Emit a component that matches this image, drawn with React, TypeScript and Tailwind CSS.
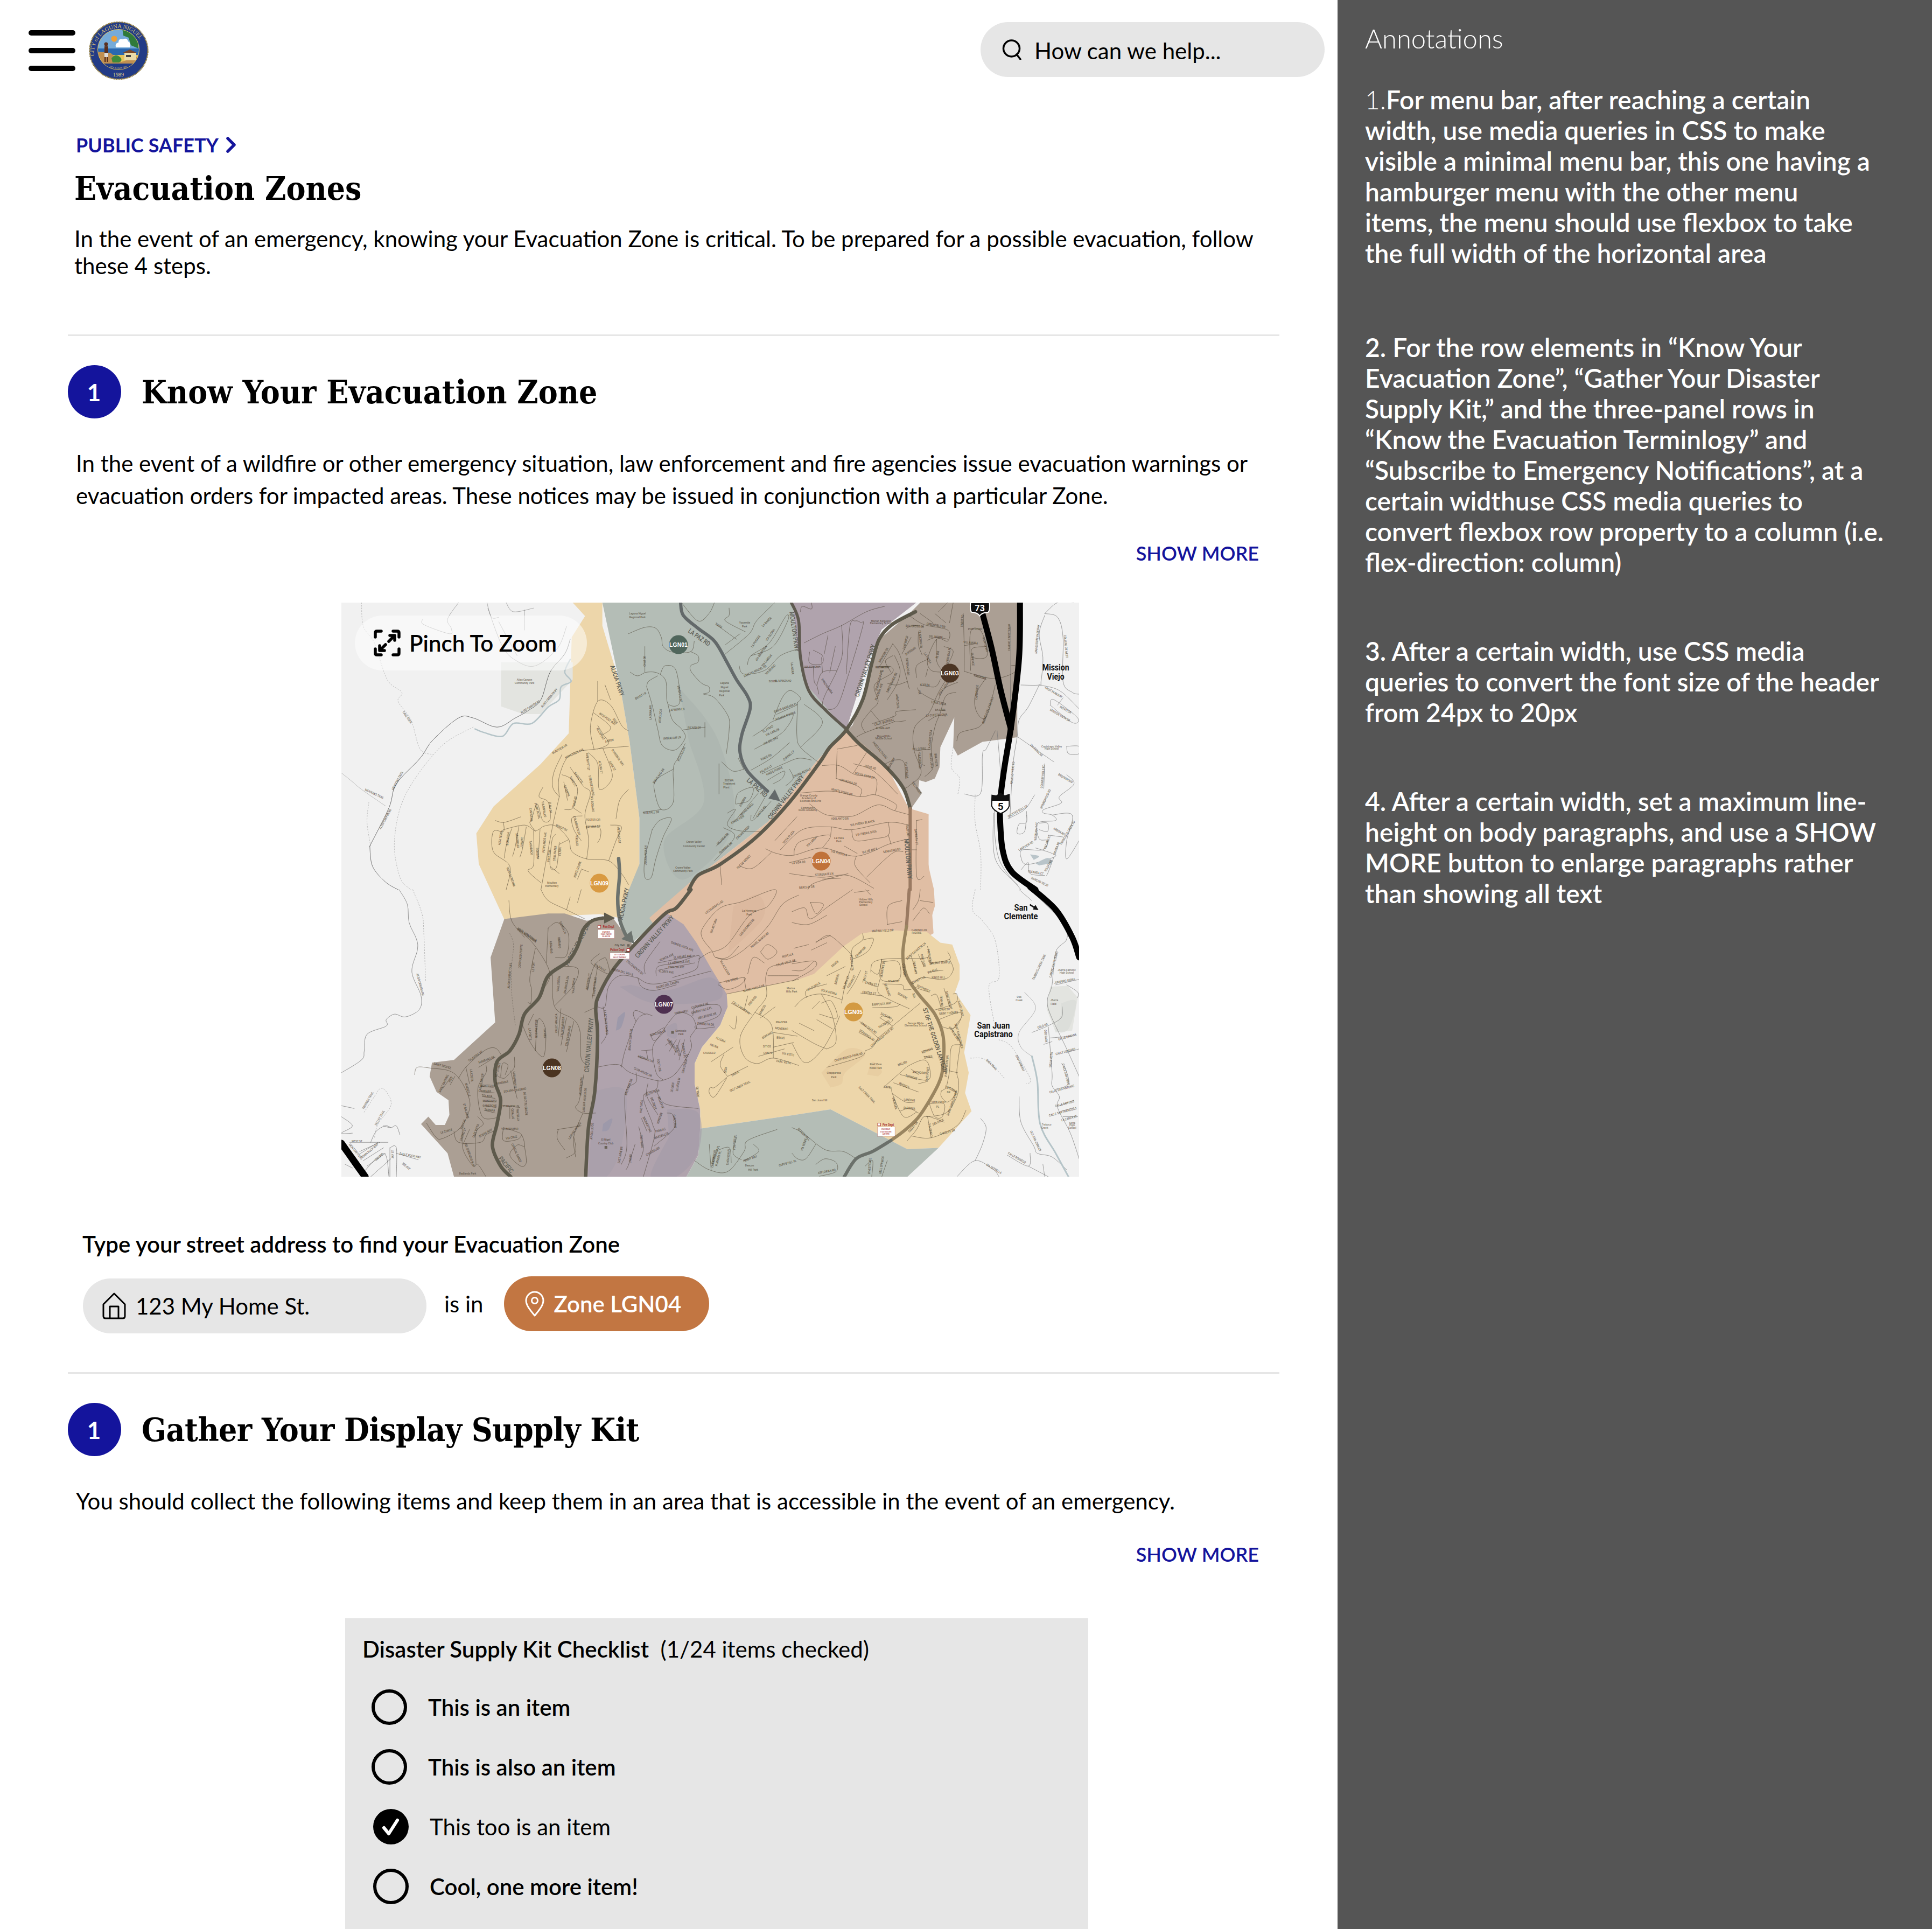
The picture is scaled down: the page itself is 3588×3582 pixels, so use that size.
import React from "react";

const smooth = (s: string, close = false) => {
  const p = s.trim().split(/\s+/).map((a) => a.split(",").map(Number));
  let d = `M${p[0][0]} ${p[0][1]}`;
  for (let i = 0; i < p.length - 1; i++) {
    const a = p[Math.max(0, i - 1)], b = p[i], c = p[i + 1], e = p[Math.min(p.length - 1, i + 2)];
    d += ` C${b[0] + (c[0] - a[0]) / 6} ${b[1] + (c[1] - a[1]) / 6} ${c[0] - (e[0] - b[0]) / 6} ${c[1] - (e[1] - b[1]) / 6} ${c[0]} ${c[1]}`;
  }
  return d + (close ? " Z" : "");
};

const Line = ({ s, c = "#3a3020", w = 1, o = 0.5, dash }: { s: string; c?: string; w?: number; o?: number; dash?: string }) => (
  <path d={smooth(s)} fill="none" stroke={c} strokeWidth={w} strokeOpacity={o} strokeDasharray={dash} strokeLinecap="round" strokeLinejoin="round" vectorEffect="non-scaling-stroke" />
);
const Patch = ({ s, c, o = 0.55 }: { s: string; c: string; o?: number }) => <path d={smooth(s, true)} fill={c} fillOpacity={o} />;

type Lb = [number, number, number, string];
const Labels = ({ list, size = 18, fill = "#3a3020", o = 0.68, weight = 500, sx = 0.8 }: { list: Lb[]; size?: number; fill?: string; o?: number; weight?: number; sx?: number }) => (
  <>
    {list.filter((l) => l[3]).map(([x, y, r, t], i) => (
      <text key={i} x={0} y={0} transform={`translate(${x} ${y}) rotate(${r}) scale(${sx} 1)`} textAnchor="middle" fontSize={size} fill={fill} fillOpacity={o} fontWeight={weight} style={{ fontFamily: "Roboto, sans-serif" }}>
        {t}
      </text>
    ))}
  </>
);

const z6Streets = [
  "445,90 450,120 590,170 600,140 580,90 640,0", "795,0 820,80 860,80", "800,30 880,240 960,320 1060,345 1180,250 1230,130",
  "900,0 940,50 1050,30", "1000,40 1000,150", "860,105 900,180 960,290", "1190,1060 1190,950 1250,830 1390,800 1568,785",
  "1190,1060 1150,1240 1090,1568", "1205,830 1160,930 1155,1010 1190,1060", "1250,900 1320,1000 1360,1040 1330,1160 1350,1290 1340,1400",
  "1205,940 1250,960 1290,1020 1265,1120 1220,1130", "1215,980 1235,1080", "1380,800 1360,680 1400,540 1470,560 1530,670 1568,700",
  "1375,600 1470,680 1420,725", "1400,670 1430,720 1460,770 1400,800", "1350,820 1400,880 1410,1020 1480,950 1430,800",
  "840,1190 890,1200 980,1170", "885,1200 885,1250 830,1250 830,1360 920,1440 900,1568",
  "885,1240 1000,1215 1060,1245 1110,1220 1170,1220 1240,1290 1260,1360 1340,1400 1460,1410 1530,1480 1568,1540",
  "930,1235 900,1330 890,1395", "970,1220 950,1330 935,1385", "1010,1225 990,1340 975,1390", "1050,1245 1050,1430 1020,1465 1090,1530",
  "1085,1240 1075,1400", "1100,1010 1080,1060 1130,1090 1140,1185 1100,1190 1070,1100 1040,1180 1030,1205 1060,1250",
  "1140,1440 1190,1480", "1170,1265 1150,1300 1140,1440 1175,1445 1190,1310", "1240,1295 1190,1320", "1265,1120 1310,1150",
  "1315,1165 1260,1175 1270,1240 1310,1300", "1340,1220 1410,1230 1415,1280 1400,1310", "1470,1215 1530,1225 1500,1300 1460,1410",
  "1500,1180 1520,1080 1568,1020", "1310,1460 1290,1510", "1310,1455 1350,1470", "1400,430 1400,540", "1440,450 1470,530",
];
const z6Labels: Lb[] = [
  [1000, 425, 0, "Aliso Canyon"], [1000, 445, 0, "Community Park"], [1035, 575, -32, "ALISO CANYON RD"], [1140, 525, -50, "ALISO CREEK PKWY"],
  [245, 1185, -62, "ALISO CANYON RD"], [178, 1050, 25, "MEADOWS TRAIL"], [312, 975, -62, "MEADOWS TRAIL"], [355, 630, 55, "CAVE ROCK"],
  [1195, 805, -30, "BEAUVIEW DR"], [1275, 830, -25, "HIGHLANDS AVE"], [1340, 870, 85, "AMETHYST ST"], [1410, 900, 80, "ALTURA ST"], [1475, 895, 60, "DARK ST"],
  [1290, 960, 55, "BAGUETTE"], [1360, 1000, 80, "S BRIDGETON DR"], [1260, 980, 60, "THIRD CT"], [1225, 1030, 70, "SEVENTH"], [1280, 1090, -80, "TRINIDAD"],
  [1100, 1130, 80, "VIA RAPALLO"], [1135, 1120, 85, "ELMA DR"], [1065, 1140, 75, "POINT ROYAL"], [1030, 1160, 85, "CHRISTINA"], [1200, 1235, 25, "WINGS DR"],
  [1115, 1310, -85, "PEPPLANDS AVE"], [1375, 1190, 0, "FOSTER CIR"], [1375, 1230, -5, "BALMAR DR"], [1280, 1220, 75, "COLDBROOK DR"], [1280, 1300, 85, "VIRGILIO"],
  [875, 1285, -80, "ALTA TERRA"], [915, 1290, -85, "BONAFILIA"], [955, 1300, 85, "STAVANGER"], [992, 1310, -85, "JUANITE"], [1030, 1340, 85, "TAMARACK"], [1065, 1370, 85, "SONOMA"],
  [1140, 1385, -85, "PRESTON"], [1172, 1370, -85, "STILLWATER"], [1200, 1360, -85, "FILTON"], [1490, 650, 55, "SEER"], [1450, 640, 35, "WESTPOST WAY"], [1410, 720, 60, "ROCKPORT"],
  [1465, 760, -15, "AARON"], [1505, 850, 55, "POWERFUL WAY"], [1365, 1100, 85, "DEL ROSARIO"], [1510, 1270, 85, "MESHILLO ST"], [1150, 1535, 0, "Moulton"], [1150, 1552, 0, "Elementary"],
  [1295, 1460, -70, "WHITE GOOSE"], [920, 1500, 70, "VISTA MONTANA"],
];
const z7Streets = [
  "0,170 90,135 150,140 180,190 190,240 240,270 340,268 360,210", "340,268 380,290 380,325 340,345 345,380 400,440 440,460 440,490 410,500 470,520 545,620 550,700 535,825",
  "90,240 90,380", "10,380 50,400 100,380 160,385 205,430 215,550 280,545 260,370 200,345 175,390", "100,460 130,560 160,690 185,780 255,805 310,740 290,690 240,640 215,550",
  "100,460 110,430 160,400", "300,695 420,680", "418,655 418,735", "245,910 150,970 145,1040 180,1130 245,1090 245,910 270,850 310,770", "80,1145 180,1130",
  "130,1240 170,1190 235,1180 190,1280 150,1400 125,1500 90,1500 90,1400 130,1240", "605,345 630,390 745,370 830,290 920,255", "650,340 670,290 770,220 860,75 870,100 790,240 670,290",
  "690,800 840,710 900,610 810,640 770,660 740,690 680,730", "810,610 920,560", "925,545 940,520 885,480 840,520 790,640", "925,545 920,720 940,790 1035,870", "940,790 1060,655 960,555",
  "670,915 780,850 880,765", "730,935 850,880 930,850 1000,860", "880,910 900,960 860,1000", "760,970 850,920 840,960 790,990", "630,910 600,850", "510,870 570,920 630,910", "495,880 495,1045",
  "585,1100 600,1040 680,1010 660,1080 590,1100", "580,1195 710,1040", "680,1180 745,1065", "670,1160 680,1190 780,1085", "540,1150 585,1130 540,1210 600,1245 720,1250", "480,1330 545,1265", "520,1230 580,1280 470,1410",
  "1140,800 1250,780", "1135,960 1140,810", "1135,960 1265,1010 1265,1060", "1060,890 1150,890 1240,940 1350,960 1350,1050", "1230,880 1340,920 1470,1045", "1230,930 1300,820",
  "940,1040 1110,1030 1265,1060 1350,1050 1460,1100 1455,1135", "990,1100 1060,1150 1120,1165 1230,1165 1360,1105 1450,1135 1540,1160",
  "750,1345 810,1370 900,1380 1060,1340 1245,1385 1420,1320 1510,1295", "800,1300 920,1170", "830,1350 950,1240 1100,1225 1220,1240 1420,1200 1530,1215", "905,1380 910,1340 950,1300 1100,1270 1060,1340", "1110,1225 1105,1270",
  "1220,1245 1240,1300 1340,1290 1420,1270 1420,1200", "1420,1270 1435,1320", "880,1420 1000,1390", "610,1440 680,1450 780,1365", "1245,1385 1240,1440 1320,1530", "1300,1500 1440,1370 1500,1360", "1180,1330 1250,1370",
  "940,50 950,20 1000,35 1000,0", "960,220 1060,170 1165,125 1300,50 1400,20", "1165,125 1170,270 1140,370 1060,550 1135,570 1200,400 1280,130 1270,110 1240,100 1210,130 1190,390",
  "1030,450 1060,380 1140,370", "1010,350 1015,430 1030,455 1040,500", "990,270 990,330 1055,335 1060,290 1010,260", "960,355 1050,350", "1055,300 1060,380", "1090,180 1070,280", "1130,240 1100,380",
  "290,0 380,100 440,60 470,0", "550,30 550,70 530,100 640,160", "530,280 660,170 700,100 800,0", "480,120 590,200", "530,230 610,170",
  "880,1480 1050,1500 1200,1490 1340,1560", "980,1568 1020,1530 1200,1480", "1060,1510 1160,1505", "500,1430 510,1540",
];
const z7Labels: Lb[] = [
  [50, 65, 0, "Laguna Niguel"], [50, 85, 0, "Regional Park"], [525, 445, 0, "Laguna"], [525, 467, 0, "Niguel"], [525, 489, 0, "Regional"], [510, 511, 0, "Park"],
  [550, 975, 0, "SOCWA"], [550, 995, 0, "Treatment"], [535, 1015, 0, "Plant"], [358, 1313, 0, "Crown Valley"], [358, 1335, 0, "Community Center"], [298, 1452, 0, "Crown Valley"], [298, 1472, 0, "Community Park"],
  [635, 115, 0, "Yosemite"], [635, 135, 0, "Park"], [1150, 1290, 0, "La Plata"], [1150, 1310, 0, "Park"], [95, 320, -90, "CHAT DR"], [70, 515, -30, "BRANT LN"], [125, 600, -90, "LAGUNA DR"], [180, 620, -85, "WOODLOCK"],
  [265, 590, -5, "LAPWING LN"], [360, 688, 0, "RICARD DR"], [240, 745, -5, "INGRAHAM LN"], [295, 830, -65, "RITE OLD DR"], [170, 950, -55, "BORGLAND DR"], [125, 1152, -3, "KITE FALL DR"], [100, 1380, -90, "JUAN MARIA LN"],
  [275, 500, 80, "MINDFULL DR"], [490, 130, 30, "THIRD"], [760, 110, -45, "LA BARGA"], [780, 180, -55, "VIA GLORIA"], [700, 215, -55, "LA POSADA"], [730, 280, -55, "VIA MARIPOSA"], [760, 320, -50, "VIA CAREGA"],
  [695, 380, -25, "RANCHO MIGUEL RD"], [790, 435, 0, "SOUTH"], [845, 432, 0, "EL MANZANO"], [890, 360, 85, "LA ALERA"], [780, 370, -45, "VIA BRAVO"], [860, 580, -20, "SANTA BARBARA PL"], [860, 625, -20, "AVENIDA RIVIERA"], [765, 695, -30, "EL AYRAD"],
  [790, 713, -25, "VIA CARLOS"], [780, 760, -25, "VIA DEL ORO"], [755, 850, -25, "KINGS RD"], [880, 840, -40, "QUEENS CT"], [755, 915, -30, "PALACE CT"], [800, 925, -25, "KING'S POINTE"], [950, 935, -25, "CROWN ROYALE"], [630, 1090, -60, "SONOMA"], [650, 1135, -45, "CROWN KNOLL"],
  [730, 1145, -50, "CASTLE RD"], [600, 1190, -30, "KING'S VIEW"], [630, 1260, -45, "CROWN CREEK"], [520, 1295, -45, "HILLVIEW DR"], [535, 1345, -40, "PARKSIDE DR"], [1320, 905, 15, "RIGGS RD"], [1290, 950, 15, "NUEVA VISTA DR"],
  [1200, 985, 15, "ARMADIRA DR"], [1165, 1040, 15, "MONTE VERDE DR"], [1155, 1185, 0, "ADELANTO DR"], [1280, 1210, -10, "VIA PIEDRA BLANCA"], [1300, 1265, -10, "VIA PIEDRA SOSA"], [1150, 1375, 15, "VIA PORTOLA"], [1320, 1360, -15, "VIA DE ANZA"],
  [930, 1425, -5, "LA VIDA DR"], [1070, 1490, -5, "STOREGATE LN"], [975, 1560, -5, "BARCLAY DR"], [1440, 1360, -10, "SANDLEWOOD"], [635, 1420, -45, "RUE DE MONET"], [1005, 1310, -45, "VIA LARGA"], [880, 1285, -50, "VISTA PLAZA"], [1380, 105, 0, "Marian Bergeson"],
  [1380, 118, 0, "Elementary School"], [1395, 735, 0, "Niguel Hills"], [1395, 748, 0, "Middle School"], [985, 1060, 0, "Orange County"], [985, 1074, 0, "Academy of"], [995, 1088, 0, "Sciences and Arts"], [980, 1125, 0, "Community"], [980, 1139, 0, "Roots Academy"],
  [1005, 355, 0, "VIA SONOMA"], [1395, 660, -15, "CALLE BATERIA"], [1390, 690, 0, "ALOMA AVE"], [1390, 360, 0, "GLENROCK"], [1080, 460, 55, "RANCHO MIRA"],
];
const z8Streets = [
  "470,640 510,640 530,530 590,470 680,480 790,515 1090,445", "690,480 710,530 780,550 900,520", "730,460 730,400 810,285", "790,470 800,420 900,400 1020,360 1020,400 1000,440 880,480", "800,400 1000,360", "800,440 1000,400",
  "1020,380 1090,340 1115,370 1180,370 1240,310", "500,640 520,780 490,840", "600,970 620,880 680,720 730,680 770,690", "680,720 665,680 680,660 730,680",
  "465,970 580,955 650,1000 780,1040 830,1040 900,1000 980,870 975,810 1000,770 1010,750 980,690 900,680 800,810", "800,810 770,870 790,1000 830,1040",
  "990,690 1010,640 1130,630 1130,690 1010,740 1020,760 1110,750", "710,880 770,875", "690,910 740,925 735,880", "840,850 870,830", "860,885 900,820", "890,900 920,820", "915,930 945,820", "760,800 830,755 830,780 780,825 760,790",
  "680,1000 680,1050 620,1120 630,1400 600,1500", "800,1040 790,1090 720,1130 770,1280 780,1350 720,1568", "790,1090 840,1170 1020,1195", "850,1220 880,1230 890,1300 780,1400", "745,1060 740,1130 800,1230", "710,1250 740,1320", "695,1295 720,1410 700,1480", "675,1390 640,1500 625,1530",
  "200,210 250,180 310,240 300,360 240,370", "190,400 200,210", "30,210 130,310 210,460 160,560", "130,320 100,480 110,550 105,620 90,615", "225,470 225,590 250,660 340,710 375,780 380,920 420,960", "220,470 250,425 360,430 340,520 240,630", "400,670 465,640", "270,850 300,700", "300,885 340,720", "255,800 270,650",
  "60,740 100,830 150,900 180,900 185,760 145,710 130,880", "120,680 90,740", "480,350 435,400 530,460 520,385 500,375 450,420 415,545", "470,420 440,595", "395,1010 370,1150 350,1190 390,1220 460,1220", "300,1465 350,1430 340,1350", "255,1310 250,1360 290,1420", "380,1290 250,1310", "390,1220 340,1350 350,1460",
  "1100,340 1040,260 1050,200 1140,100 1260,65 1440,0 1400,90 1300,140 1180,300 1100,340", "1115,370 1180,380 1280,320 1400,200 1480,80 1568,30", "1360,340 1400,380 1450,340 1400,300 1360,340", "1290,460 1320,370 1380,400", "1130,520 1180,545 1250,520 1270,480 1130,510", "1280,540 1270,480", "1390,520 1390,470 1420,420 1560,390", "1400,470 1568,470",
  "1175,570 1568,490", "1390,520 1390,590 1330,670 1250,800 1270,910 1340,950 1430,920 1568,960", "1330,670 1420,740 1430,920", "1200,620 1310,680", "1290,580 1270,660", "1360,700 1440,640", "1230,690 1220,760 1190,740", "1350,910 1490,870", "1090,940 1210,860", "1180,1020 1140,960 1160,900", "1180,1020 1290,965", "1175,1025 1110,1080 1085,1080 1080,1110 1110,1130 1175,1030",
  "1000,1480 1080,1530 1180,1540 1270,1430 1290,1370 1450,1310", "1320,1390 1350,1430 1270,1480", "1080,1390 1090,1530", "1230,1350 1210,1440 1255,1475", "1135,1420 1190,1410 1200,1490", "1430,780 1560,800", "1430,860 1540,835",
];
const z8Labels: Lb[] = [
  [1298, 122, 0, "La Hermosa"], [1298, 142, 0, "Park"], [515, 1370, 0, "El Nigel"], [515, 1392, 0, "Country Club"], [925, 775, 0, "Seminole"], [925, 795, 0, "Park"], [1300, 1512, 0, "Beacon"], [1320, 1534, 0, "Hill Park"], [1525, 545, 0, "Marina"], [1530, 563, 0, "Hills Park"],
  [930, 315, 20, "GRANDE VISTA AVE"], [850, 375, -25, "BONITA AVE"], [935, 372, -5, "EL AMARÉ AVE"], [915, 403, -5, "LA HERMOSA AVE"], [900, 430, 0, "ESTACIA AVE"], [845, 455, 5, "FLORES AVE"], [605, 455, 15, "PASEO DEL VALLE"], [855, 525, -15, "PASEO DEL CAMPO"], [670, 430, 40, "DOLCEMENTE DR"],
  [1030, 640, -15, "CASCADES DR"], [1040, 665, -15, "CHERRY HILLS PL"], [1070, 695, -15, "BELLEGRIVE DR"], [1060, 740, 5, "DOWNSTA DR"], [930, 675, -10, "PINEHURST"], [655, 820, -85, "BRANCH EAST DR"], [510, 725, 85, "LA ROSA DE CAMPO"], [800, 790, -15, "CONCORD LN"], [860, 840, 60, "ARROYO"],
  [880, 860, 60, "MAGNOLIA"], [905, 880, 75, "CYPRESS"], [935, 880, 80, "CYPRESS PL"], [955, 950, -75, "CANTERBURY PL"], [730, 930, 20, "MEDINAH LN"], [800, 960, 80, "SOUTH DR"], [715, 1002, 25, "CLUB HOUSE DR"], [645, 1080, -70, "EAST NINE DR"], [885, 1080, -80, "LE GOLF"], [915, 1065, -80, "LE MOULIN"],
  [770, 1115, -20, "SOUTH PEAK"], [810, 1165, 70, "BELLEVUE"], [770, 1170, 70, "BELCREST"], [715, 1185, -85, "HASTINGS"], [815, 1250, -70, "WINDSOR"], [885, 1265, 85, "CAROLTON"], [735, 1285, 65, "BROOKSTONE"], [815, 1320, -15, "PAMPAS"], [820, 1350, -20, "MARSEILLES"], [600, 1450, -80, "EAST NINE DR"], [705, 1375, 85, "RED HAWK"], [655, 1470, -85, "LINDAU"], [775, 1435, -30, "CHARDELIER"],
  [275, 210, 65, "SOBRIA LN"], [255, 290, 85, "ONTARIO"], [210, 315, 85, "ABRAMAS"], [80, 255, 35, "VISTA MONTEMAR"], [55, 365, -85, "CORONADO POINTE"], [125, 420, -85, "LE PORT"], [262, 515, -85, "VIA LUSISSA"], [305, 520, -80, "MAMMOLA LN"], [345, 525, -85, "VIA ESTONIA"], [250, 730, -90, "CALLE MALAGA"], [285, 750, -85, "CALLE BARBOSA"], [315, 800, -80, "CALLE MIRAMAS"],
  [130, 760, 90, "BELLE MAISON"], [175, 785, 90, "LA MER"], [95, 790, 85, "LA PORTE"], [425, 505, -80, "JEBOGTON CT"], [460, 530, -85, "B HAMPTON RD"], [480, 430, 30, "VIA D'ALLE"], [385, 1075, -85, "MONTEBONITA"], [405, 1150, -85, "LAGUNA WOODS DR"], [350, 1320, -55, "LAGUNA WOODS"], [445, 1320, -85, "AV DEL LIDOS"],
  [1110, 100, -35, "LAS MARAVILLAS"], [1110, 200, -70, "VIA ASTURIA"], [1290, 210, -50, "LOS GUSANOS RD"], [1360, 280, -40, "NIGUEL RANCH RD"], [1160, 430, 60, "VIA ALCAZAR"], [1205, 500, -15, "VIA VERDE"], [1510, 365, -15, "NOVELLA"], [1500, 405, -15, "CALLE VISTA DR"], [1325, 545, -15, "MARINA HILLS DR"], [1250, 650, 35, "CALLE MONTEVA"], [1320, 610, -50, "DOS RIOS"], [1250, 1080, -25, "SALT CREEK TRAIL"], [1010, 1105, 85, "DE TORO"],
  [1375, 660, -60, "MARCOS"], [1475, 730, 0, "PRADERA"], [1475, 765, 5, "MONDANO"], [1400, 800, -30, "SERRANO"], [1470, 815, 5, "BRAVO"], [1395, 862, 0, "SITIOS"], [1400, 898, 0, "CONPO"], [1510, 905, 10, "VIA VISTO"], [1485, 948, 10, "PARC VISTA"], [1175, 985, -80, "SEDA"], [1225, 1010, -30, "PARRA"], [1080, 898, 0, "CAUDILLO"], [1105, 860, 20, "PATRIA"], [1140, 825, 25, "ALEGRIA"],
  [1120, 1450, -70, "BILLINGHAM PL"], [1110, 1470, -80, "CHAMPNEY PL"], [1135, 1470, -75, "PURNIMA PL"], [1190, 1460, -85, "THOMSON PL"], [1225, 1380, -85, "FOSTERS PL"], [1305, 1475, -20, "HENRY WAY"], [1510, 1500, -15, "COPPS HILL PL"],
];
const brStreets = [
  "385,240 385,275 330,320 335,375 410,340 440,290 440,265 385,275", "0,500 120,430 120,390 0,405", "280,310 200,250 130,290", "280,310 330,380 290,520 270,620", "190,470 290,420", "375,440 340,510 300,570", "430,450 440,400 500,380 605,375", "430,440 470,460 490,380", "390,490 430,520 470,530", "480,490 470,560 530,600 640,650",
  "490,380 485,490 585,490 580,395 490,395", "495,515 600,520 610,545 650,545", "375,565 450,575 495,580", "440,645 560,640 590,625", "365,780 440,820", "370,720 470,810", "470,810 700,620", "400,880 440,860 470,810", "480,700 550,745", "480,700 500,690 550,710 520,740", "190,970 370,915 400,880",
  "760,580 790,575 815,650", "770,660 890,620 900,570 880,570", "800,710 920,670 910,730 870,760 810,745", "870,760 920,840 870,860 860,990 845,1070", "860,990 905,1000", "920,840 900,990 910,1050 900,1130 840,1220 730,1240", "880,760 925,700",
  "620,375 740,370 740,310", "650,360 680,460", "690,355 720,420", "740,370 760,400 860,380 850,340", "860,380 880,440 830,490 710,480 660,520 690,540 750,560", "745,450 825,440", "830,540 860,640",
  "500,1080 590,1000 640,960 720,930 750,970 740,1040 590,1010", "650,980 690,1010", "545,1080 550,1120 610,1240 680,1215", "555,1055 690,1105", "550,1115 620,1160 670,1160", "590,1210 640,1195 690,1220", "690,1060 730,1050",
  "715,880 770,870", "720,910 770,920", "815,1100 860,1080 895,1110 850,1160 815,1130 815,1100", "750,1170 830,1170 820,1240 780,1240 750,1170", "630,1370 680,1310 720,1240 780,1250 830,1270", "650,1345 760,1355 900,1290 950,1205", "760,1355 740,1240",
  "0,840 70,945 160,880 230,760 260,690", "0,770 120,840 190,870", "15,640 70,590 160,570 270,600", "160,570 220,690 240,830 190,870", "160,620 215,610 245,700 150,680", "80,590 80,550 190,515", "40,730 120,770", "135,710 220,760", "110,650 150,610",
  "0,440 60,440 120,390", "10,320 90,300", "105,330 190,290", "130,285 210,250", "0,120 70,100 100,160 200,90 330,0", "100,70 165,75 165,100 130,130 100,70", "0,180 90,190 190,140", "520,190 600,175", "520,190 525,90 600,60", "660,170 690,130 720,100 750,130", "700,60 770,70", "700,0 690,60 660,110", "400,0 430,30", "340,15 420,5",
  "0,1300 60,1330 180,1420 280,1430 350,1470", "130,1390 75,1470 30,1470 0,1440", "130,1500 180,1470 240,1490 240,1540 150,1565", "400,1510 440,1480 435,1568", "520,1480 490,1568",
];
const brWhite = [
  "1240,0 1310,60", "1300,0 1480,180 1500,270 1440,340 1420,520 1395,600 1410,680 1500,870 1568,1020", "1440,520 1568,490", "1500,520 1560,560 1560,590", "1310,780 1395,745 1470,700 1475,640", "1375,845 1420,830", "1400,750 1420,1000 1420,1070 1460,1130 1450,1190 1520,1330 1568,1470", "1440,1090 1510,1060 1490,970 1470,950",
  "1460,1180 1540,1150", "1470,1210 1540,1190", "1480,1240 1560,1240", "1240,1130 1250,1270 1320,1400 1340,1440 1420,1460 1500,1530", "900,1568 1000,1480 1100,1530 1130,1568", "1175,1450 1290,1510 1300,1440", "1290,1510 1400,1568", "1030,1250 1060,1300 1040,1390 1000,1480", "1370,1500 1380,1568", "1410,810 1530,800", "1500,890 1568,870",
];
const brLabels: Lb[] = [
  [228, 1007, 0, "Chapparosa"], [228, 1028, 0, "Park"], [457, 958, 0, "Reef View"], [457, 978, 0, "Node Park"], [150, 1155, 0, "San Juan Hill"], [1240, 590, 0, "Oso"], [1240, 610, 0, "Creek"], [1432, 608, 0, "JSerra"], [1428, 630, 0, "Field"], [1390, 1287, 0, "Trabuco"], [1380, 1307, 0, "Creek"],
  [403, 60, 0, "Hidden Hills"], [403, 73, 0, "Elementary"], [390, 87, 0, "School"], [675, 735, 0, "George White"], [675, 748, 0, "Elementary School"], [1500, 445, 0, "JSerra Catholic"], [1500, 458, 0, "High School"], [1530, 1279, 0, "Serra"], [1530, 1292, 0, "High"], [1530, 1305, 0, "School"],
  [495, 230, -3, "MARINA HILLS DR"], [695, 225, 0, "CAMINO LOS"], [680, 240, 0, "PADRES"], [378, 345, -45, "CHAMPION"], [237, 410, -40, "ARGOS"], [250, 490, -75, "BRINDISI"], [300, 510, -70, "SOLANA ST"], [330, 505, -60, "FUSHIMI ST"], [320, 400, 85, "PIEDRA ALTA"], [120, 535, -30, "VIA DI NOLA"], [200, 565, 15, "SOLA SIERRA"], [420, 570, 8, "CENTRA ST"], [405, 478, -75, "TENTH ST"], [430, 520, 12, "STERN ST"], [490, 630, -5, "BARPOSTA WAY"],
  [555, 505, 0, "SEAPORT"], [500, 435, -80, "SEABRAKE DR"], [605, 440, 85, "COLEPORT"], [600, 585, 30, "SEATERE"], [660, 580, 75, "SEA"], [515, 550, 70, "SEABOARD"], [680, 340, -40, "SAINT SALVATOR LN"], [665, 425, 80, "PINE ELMS"], [710, 390, 75, "PINE ELMS"], [745, 370, 80, "PROVIDENCE"], [810, 405, -3, "SALEKIT TEMPLE"], [690, 500, -25, "SERENITY LN"], [770, 450, -20, "VIA BELL"], [800, 485, 0, "KINGS HILL"], [715, 545, 25, "SOUTHERLY"],
  [810, 610, 85, "PENNING"], [850, 605, 75, "SAINT VINCENT"], [915, 650, 75, "SAINT CROIX"], [830, 660, -3, "CORAZZO"], [855, 680, -5, "SAINT THOMAS"], [880, 790, 55, "VISTA DE ORO"], [905, 800, 75, "SAINT CHRISTOPHER"], [850, 965, -85, "VIANA POINTE DR"], [865, 1095, 25, "VISTAMAR"], [855, 1112, 0, "DR"], [880, 1170, -70, "SAINT CHRISTOPHER"], [800, 1165, 0, "VIEW POINT"], [795, 1192, 0, "PL"], [800, 1275, -25, "SEA ROCK"], [750, 1315, 80, "VIA GRANT"], [665, 1300, -50, "SEELEY DR"], [850, 1330, -15, "OAKCLIFF DR"],
  [740, 885, -20, "KEEWAYS"], [745, 920, -10, "DORES"], [605, 955, -20, "MALIBU"], [695, 1005, 5, "ANCHORAY"], [650, 1030, 15, "TOPSIDES"], [745, 1010, -85, "CAPE POINT"], [610, 1075, 25, "WHISKEY"], [520, 1085, 10, "CAPRI"], [555, 1170, 75, "MAINSAIL"], [640, 1155, 5, "LANDING"], [640, 1200, 5, "SARDINIA"], [415, 760, 35, "SAND OAKS RD"], [405, 800, 35, "SEABRINGE RD"], [495, 810, -40, "CHAPPARIOSA PARK RD"], [510, 695, 25, "SALTAIRE"], [505, 740, -30, "GOLDBIRD"], [310, 920, -15, "CHAPPARIOSA PARK RD"],
  [405, 1125, 45, "SALT CREEK TRAIL"], [60, 1340, 45, "BEACON HILL"], [70, 1395, -70, "VIA VERDE"], [190, 1545, -10, "ASFLORIAN RD"], [430, 1510, -85, "INVESTIGATE"], [495, 1505, -80, "BELL SPRINGS"], [1370, 750, -20, "GOLD RD"], [1380, 800, 85, "OSO PARK"], [1505, 810, -15, "CALLE CABANA"], [1495, 890, -15, "CALLE LUNDARO"], [1420, 930, -85, "SOLIA VISTA"], [1490, 1010, 75, "CALLE SAN DIEGO"], [1475, 1095, -15, "CALLE SAN ANTONIO"], [1490, 1175, -15, "CALLE SAN LUIS"], [1480, 1220, -15, "CALLE SAN FRANCISCO"], [1515, 1255, -15, "LA ZARZA ST"], [1325, 1375, 65, "OLD SAN JUAN RD"], [1225, 1470, 30, "CALLE BORREGO"], [1100, 1530, 30, "VIA ESTRELLA"], [1240, 950, 65, "OSO PARKWAY"], [1085, 960, 45, "SHEA TRAIL"], [1355, 425, -65, "TRABUCO CREEK TRAIL"], [1435, 410, -75, "CAMINO CAPISTRANO"], [1490, 505, -10, "JUNIPERO SERRA"],
];
const trStreets = [
  "640,70 720,120 850,150 850,210 790,200 740,310 760,370 830,380", "625,140 660,125 715,130", "550,225 590,290 640,470", "690,160 690,230 710,285", "740,205 790,190 850,200", "600,280 650,190", "680,410 680,345 740,310", "730,405 740,365", "830,240 880,265 850,340", "790,200 790,320 830,380",
  "940,375 1060,410 1140,410 1215,380 1220,345 1195,345", "940,375 940,235 935,60", "975,370 975,160 1035,160 1065,290 990,300 985,250 1060,240", "940,235 1000,225", "1060,410 1000,510 1010,600 1060,625 1110,450", "1060,625 1020,680 920,710 900,755", "995,400 1060,420",
  "880,360 800,490 750,600 670,680 665,800 705,930 640,1000 610,1015", "905,435 830,470 800,530", "895,490 840,510 810,600 780,680 760,800 770,900 725,950", "685,465 700,490 770,530 840,550", "700,450 780,460 810,420", "785,585 835,590", "745,645 790,620 840,620", "670,810 750,800", "690,830 695,905", "710,810 710,885", "725,890 710,885",
  "550,225 490,330 480,350 540,350 545,385 450,450 470,540 430,590 380,660 400,710", "550,290 510,320 540,380", "560,290 590,370 570,450 520,530", "520,440 570,450 630,430", "430,590 480,650", "440,660 560,620 570,595 675,585", "550,620 560,650 620,645", "350,735 400,710 560,650", "510,880 560,860 610,870 620,960",
  "700,60 770,110", "780,60 840,110", "880,0 860,110", "850,0 800,50",
  "680,1190 710,1185", "680,1190 680,1490 720,1495", "640,1350 680,1350",
];
const trWhite = [
  "1380,60 1450,0 1540,0", "1380,60 1450,80 1480,190 1480,430 1530,490 1568,500", "1380,70 1350,170 1370,300 1360,430 1350,450 1250,450", "1350,450 1460,480 1568,580", "1410,560 1430,530 1560,630 1530,655 1410,560", "1480,520 1450,560", "1350,450 1290,570 1240,640 1230,730 1205,900 1190,1180", "1235,735 1430,870", "1380,880 1375,1015",
  "1500,940 1540,990 1460,1060 1470,1095 1375,1130 1375,1150 1420,1160 1440,1190 1340,1205 1350,1290 1395,1300 1370,1350 1260,1350 1250,1390 1285,1430 1430,1390 1420,1370 1330,1340", "1420,1160 1530,1160 1500,1300 1500,1400 1568,1300", "1325,1050 1270,1130 1180,1180", "1280,1140 1280,1200 1240,1210 1230,1260 1270,1250 1280,1160", "1350,1205 1395,1205 1395,1250 1350,1240", "1400,1270 1480,1280", "1250,1460 1290,1420 1300,1480 1380,1490", "1430,1390 1400,1470 1390,1490", "1110,700 1060,800 1040,830 1030,1040 940,1045", "1100,1150 1110,1400 1230,1540",
  "1190,120 1195,230 1190,750", "1500,785 1568,785 1568,825 1510,825 1500,785",
];
const trLabels: Lb[] = [
  [1418, 790, 0, "Capistrano Valley"], [1418, 803, 0, "High School"], [670, 135, 3, "SOLIGROSO DR"], [785, 130, 10, "GREENFIELD DR"], [785, 193, 5, "DEL NORTE"], [625, 220, -75, "LAKEWOOD"], [650, 270, -35, "SHERIDAN"], [695, 200, 85, "CLARKSON DR"], [735, 305, 60, "LA TRUSA"], [800, 285, -80, "EL BIR"], [860, 290, -80, "MIRAVENA PL"], [935, 100, -85, "CABOT RD"], [1000, 150, 0, "PORTOFINO"], [975, 225, 5, "VILLAMURA"], [980, 310, 85, "FLORENCE"], [1050, 230, 75, "MONTEFINO"], [1025, 410, 15, "PASOFINO"], [1015, 490, -85, "CAMBRIDGE"], [1075, 590, -70, "AVENIDA DEL CABALLO"], [1190, 190, -90, "CAMINO CAPISTRANO"],
  [505, 290, -60, "BRANDON DR"], [490, 360, 0, "GLENROCK"], [490, 378, 0, "DR"], [480, 430, -75, "SPRINGFIELD DR"], [480, 490, -70, "PLACERIA AVE"], [550, 440, -65, "SWEETBRIDGE DR"], [625, 350, 85, "SILVERADO DR"], [570, 540, 85, "AMATOS PL"], [725, 455, 5, "A VISTA"], [690, 490, 85, "VIA"], [835, 470, -55, "VISTA LAGUNA"], [800, 555, 10, "LOMA LINDA"], [810, 590, 0, "LA CIMA"], [790, 620, -3, "LA CUESTA LOMA"], [760, 750, -85, "LA CANRISTERA"], [695, 805, -3, "DEL CERRO"], [692, 860, 85, "VIA CERRITO"], [755, 865, 85, "BELLE LUNA"], [780, 860, 85, "BRA VISTA"], [545, 885, -60, "CABAN BAY"], [620, 915, 85, "VIA ENTRADA"], [675, 1015, 55, "VIE CANDIA"], [475, 810, 50, "PASEO DE OCASO"],
  [1345, 200, -85, "MARGUERITE PARKWAY"], [1490, 240, 85, "COLLEGE DR WEST"], [1425, 495, 30, "ARIST PARKWAY"], [1490, 590, 30, "INOVIO DR"], [1460, 620, 30, "MISSION VISTA DR"], [1330, 810, 45, "VIA ESCOLAR"], [1210, 930, -85, "RANCHO VIEJO RD"], [1375, 950, -85, "COUNTRY HILLS RD"], [1490, 965, 30, "BROOKWOOD"], [1390, 1075, -65, "SPRINGWOOD RD"], [1235, 1145, -30, "SPOTTED BULL LN"], [1340, 1250, -85, "WESTMONT CT"], [1400, 1310, -70, "VILLANO ST"], [1455, 1255, 30, "ARBOR RD"], [1510, 1260, -60, "FRANCISCO CREEK RD"], [1450, 1345, -70, "ORIANA RD"], [1280, 1335, -30, "LAKEVIEW RD"], [1405, 1440, -60, "WILDFORD"], [1330, 1480, 10, "OLEANDA CT"], [1350, 1530, 25, "RANCHO VIEJO"], [672, 1280, 85, "SAPARITA ST"], [625, 1245, 85, "PALO LOS"],
];
const blStreets = [
  "400,1010 415,970 490,975 590,990 650,1040 700,1150 690,1230 640,1310 550,1360 515,1350 465,1275", "640,1030 680,970 780,880 840,865 875,905", "750,970 840,915", "680,970 700,1060", "555,1085 600,1020", "595,1065 620,1020", "790,960 790,1000 745,1090 770,1240 855,1245", "765,1075 830,1080", "765,1105 835,1110", "770,1130 840,1140", "775,1155 845,1160", "775,1180 845,1190", "780,1205 840,1220",
  "615,1320 640,1380 760,1380 790,1340 830,1320", "660,1310 665,1420 720,1510 745,1500 790,1568", "745,1240 775,1280 735,1330 735,1500", "700,1310 665,1390", "885,1180 975,1190", "920,1190 920,1250", "885,1300 950,1320 985,1340 1000,1400 960,1395 920,1450 980,1510 1010,1490 1000,1400", "885,1300 885,1370 960,1365 985,1340", "855,1020 890,1030 920,1000 945,970 945,915", "870,1020 880,950 910,960 895,1010", "925,990 950,1100 960,1140",
  "1090,0 1130,60 1230,110 1330,160", "1230,110 1250,40", "1290,70 1310,0", "915,60 930,170 1000,260",
];
const blWhite = [
  "315,0 360,80 370,180 410,270 415,330 385,450 435,580 425,655 350,695 290,680 245,710 245,745 140,790 125,880 110,930 0,1000", "0,1180 70,1195", "0,1240 60,1290 0,1330 60,1330", "45,1380 255,1380", "100,1430 210,1380", "90,1450 200,1380", "120,1480 230,1410", "140,1510 240,1440", "265,1410 300,1410 300,1568", "300,1440 420,1475", "265,1410 265,1568", "160,1380 190,1320 240,1290 270,1300", "230,1290 270,1300 300,1290 320,1340", "100,1568 230,1440 260,1568", "160,1568 270,1470", "20,1500 60,1520",
];
const blLabels: Lb[] = [
  [425, 520, 75, "ALISO CANYON RD"], [690, 1555, 0, "Badlands Park"], [925, 470, -85, "ALISO SUMMIT TRAIL"], [1010, 250, 35, "VISTA MONTEMAR"], [735, 915, -35, "TALAVERA DR"], [795, 935, -20, "MARBANO DR"], [550, 968, 15, "SAINT TROPEZ"], [705, 1015, 85, "LA COSTA"], [565, 1060, -65, "SAINT RAPHAEL"], [602, 1040, -60, "NICE"], [685, 1095, 75, "MARSEILLE"], [770, 1055, -80, "CABALLERO DR"], [800, 1076, 0, "MONTCLAIR"], [790, 1105, 0, "ANDARA"], [795, 1133, 5, "TOLARIA"], [810, 1158, 0, "MONTALVO"], [810, 1185, 0, "CAMERONE"], [810, 1210, 5, "TAMARA"],
  [925, 1188, 0, "STARVIEW LN"], [675, 1210, 75, "ST BALDWIN"], [670, 1285, -70, "SOLVON"], [575, 1325, -15, "LE CONTE"], [670, 1340, -70, "CASERO ST"], [740, 1320, -70, "OLEE VISTA"], [790, 1335, -30, "OCEAN WAY"], [695, 1450, 70, "DEL SOBRADOS WAY"], [85, 1378, 0, "WEST ST"], [70, 1430, 50, "MONTEREY ST"], [155, 1435, -40, "CROWN ROCK WAY"], [210, 1465, -40, "200 AVE"], [285, 1445, -90, "JAY ST"], [375, 1458, 10, "EAGLE ROCK WAY"], [350, 1515, 40, "300 AVE"], [150, 1155, -60, "TOPANGA TRAIL"], [215, 1250, -60, "VALLEY TRAIL"], [880, 1060, -10, "MIRAMAR"], [915, 1105, -10, "SOLANA"], [978, 1098, -10, "CASSANO"], [930, 1225, 85, "CEFALLO"], [958, 1230, 85, "PARTELLA"], [920, 1312, 0, "VIA MIRAMAR"], [930, 1360, -10, "VIA CRUZ"], [950, 1440, 65, "CRYSTAL SANDS"], [1000, 1170, 85, "DE GROTTE GRAZIE"], [940, 1040, 85, "MIRAMONTES"], [860, 985, -75, "KEY STREET"],
];

const Circle = ({ x, y, c, t }: { x: number; y: number; c: string; t: string }) => (
  <g>
    <circle cx={x} cy={y} r="17.5" fill={c} />
    <text x={x} y={y + 4} textAnchor="middle" fontSize="10.5" fontWeight="700" fill="#fff" style={{ fontFamily: "Liberation Sans, sans-serif" }}>{t}</text>
  </g>
);

const HUGE = { size: 36, fill: "#5f5f58", o: 1 };

const MapArt = () => (
  <svg viewBox="0 0 1370 1066" className="block h-full w-full" style={{ fontFamily: "Roboto, sans-serif" }}>
    <rect width="1370" height="1066" fill="#f1f1f1" />
    <g transform="translate(-34 -28.5) scale(.918 .714)">
      <polygon fill="#edd6aa" points="505,40 530,75 503,130 497,380 440,460 345,570 310,640 315,720 367,865 380,860 560,850 600,860 625,925 640,720 640,600 620,400 600,250 565,100 565,40" />
      <polygon fill="#b4bdb6" points="565,40 950,40 958,150 975,250 1058,372 1000,450 900,610 820,690 740,770 690,850 625,925 600,870 605,830 640,720 640,600 620,400 600,250 580,130" />
      <polygon fill="#b0a3ad" points="950,40 1200,40 1130,110 1100,200 1058,372 975,250 958,150" />
      <polygon fill="#e0bea4" points="1058,372 1130,440 1185,575 1225,590 1225,720 1235,900 1100,1000 815,1100 760,1100 720,1000 680,900 660,860 740,770 820,690 900,610 1000,450" />
      <polygon fill="#e3e4e0" points="360,195 505,195 505,240 440,330 405,330 360,310" />
      <Patch s="720,260 800,400 830,620 730,760 690,660 770,560 740,400" c="#aab3ad" />
      <Patch s="830,830 880,800 890,860 820,950" c="#d8b49a" />
    </g>
    <g transform="translate(837 0) scale(.34)">
      <polygon fill="#ab9f94" points="300,700 330,670 390,520 450,280 490,190 640,60 700,0 1230,0 1230,735 1040,760 905,835 880,790 890,520 930,535 880,640 810,790 805,900 780,960 730,980 695,970 690,1010 710,1040 650,1125 600,1020 500,870" />
      <polygon fill="#e0bea4" points="640,1125 745,1160 722,1340 775,1568 640,1568" />
    </g>
    <g transform="translate(837 533) scale(.34)">
      <polygon fill="#e0bea4" points="630,0 775,0 780,90 735,240 600,260 600,0" />
      <polygon fill="#edd6aa" points="-357,570 36,490 120,460 280,310 380,240 500,220 735,230 810,290 875,300 915,410 915,490 890,560 975,685 940,890 965,1000 945,1110 980,1210 800,1410 630,1418 210,1200 0,1232 -502,1305 -502,1200 -532,1060 -532,950 -492,860 -392,740 -352,640" />
      <polygon fill="#b4bdb6" points="-502,1305 0,1232 210,1200 630,1418 800,1410 630,1568 -577,1568 -512,1450" />
      <Patch s="160,1000 300,870 400,900 290,1000 270,1060 210,1080" c="#e3c89a" />
      <Patch s="410,1010 440,940 490,990 470,1020" c="#e3c89a" />
      <polygon fill="#e3e4e0" points="1410,530 1505,525 1560,590 1530,770 1440,780 1390,650" />
      <Patch s="1470,620 1550,610 1510,760 1440,770 1470,680" c="#dadcd8" o={0.8} />
    </g>
    <g transform="translate(316 533) scale(.34)">
      <polygon fill="#b0a3ad" points="850,130 940,190 1010,290 1090,430 1175,570 1180,640 1140,740 1040,860 1000,950 1000,1060 1030,1200 1030,1305 1020,1450 955,1568 405,1568 420,1300 455,1100 470,800 460,650 480,570 560,430 700,270" />
      <Patch s="590,530 780,620 1130,600 1090,480 850,550 650,520" c="#a39aa7" />
      <Patch s="850,1200 1020,1220 1020,1430 900,1568 760,1568 860,1350" c="#a39aa7" />
      <Patch s="450,1100 620,1100 600,1400 520,1568 420,1568" c="#a39aa7" o={0.4} />
      <Patch s="580,700 620,670 600,750 570,770" c="#9b98aa" o={0.9} />
      <Patch s="500,1280 550,1250 530,1310 495,1320" c="#9b98aa" o={0.9} />
      <Patch s="845,750 900,730 900,810 850,800" c="#a39aa7" />
    </g>
    <g transform="translate(0 533) scale(.34)">
      <polygon fill="#ab9f94" points="890,160 1130,130 1220,130 1340,170 1480,150 1590,300 1489,430 1409,570 1389,650 1399,800 1384,1100 1349,1300 1334,1568 615,1568 580,1440 435,1280 475,1240 515,1285 565,1285 590,1230 585,1150 520,1105 482,1020 495,945 615,930 840,725 815,370" />
    </g>
    <g transform="scale(.34)">
      {z6Streets.map((s, i) => <Line key={i} s={s} c={i < 6 ? "#666" : "#3a3020"} />)}
      <Line s="155,1330 260,1120 300,990 430,850 500,750 640,630 720,630 850,680 950,630 1020,590 1090,530 1140,380 1220,280 1250,200" c="#444" w={1} o={0.75} />
      <Line s="155,1330 170,1440 240,1525 310,1568" c="#444" w={1} o={0.7} />
      <Line s="730,690 780,710 880,730 940,660 1040,660 1130,570 1190,530 1200,460 1255,430 1220,380 1250,310" c="#b5c4c8" w={2.5} o={1} />
      <Line s="110,0 120,130 180,220 250,420 330,490 310,540 380,640 430,800 500,830" c="#888" dash="2 3" />
      <Line s="0,930 50,970 110,1020 240,1110" c="#888" />
      <Line s="150,1090 140,1200 160,1330" c="#888" dash="2 3" />
      <Line s="720,680 540,790 350,1050 290,1300 320,1500 380,1568" c="#888" dash="2 3" />
      <Labels list={z6Labels} />
      <Labels list={[[1495, 430, 72, "ALICIA PKWY"]]} {...HUGE} />
    </g>
    <g transform="translate(533 0) scale(.34)">
      {z7Streets.map((s, i) => <Line key={i} s={s} />)}
      <Line s="285,0 300,70 380,140 470,210 530,310 590,420 650,510 665,580 620,720 610,820 650,920 760,1030" c="#63696a" w={6} o={1} />
      <polygon fill="#63696a" points="765,1070 830,1085 800,1020" />
      <Labels list={z7Labels} />
      <Line s="890,0 930,100 940,300 985,480 1080,590 1190,690" c="#5f5a50" w={5.5} o={1} />
      <Line s="1568,50 1440,120 1370,200 1330,330 1280,530 1190,695 1100,790 1040,880 880,1090 700,1280 500,1430 380,1490 330,1568" c="#5e5a4c" w={6.5} o={1} />
      <Line s="1190,695 1260,770 1400,890 1500,1010 1540,1125" c="#5e5a4c" w={6.5} o={1} />
      <Labels list={[[380, 200, 35, "LA PAZ RD"], [695, 1020, 42, "LA PAZ RD"], [895, 160, 82, "MOULTON PKWY"], [1305, 375, -72, "CROWN VALLEY PKWY"], [870, 1070, -52, "CROWN VALLEY PKWY"]]} {...HUGE} />
    </g>
    <g transform="translate(837 0) scale(.34)">
      {trStreets.map((s, i) => <Line key={i} s={s} />)}
      {trWhite.map((s, i) => <Line key={i} s={s} c="#555" o={0.55} />)}
      <Line s="1120,700 1140,1000 1105,1150 1130,1400 1250,1568" c="#777" o={0.7} />
      <Line s="880,790 870,900 915,960 905,1050" c="#999" o={0.7} dash="2 3" />
      <Line s="1000,1050 1000,1200 1030,1370 1030,1568" c="#999" o={0.7} dash="2 3" />
      <Line s="645,1125 645,1568" c="#9a7a62" w={6} o={1} />
      <Patch s="1300,1375 1350,1385 1320,1405" c="#b9c4c9" o={1} />
      <Patch s="1330,1425 1395,1395 1420,1420 1350,1435" c="#b9c4c9" o={1} />
      <Line s="1245,0 1240,300 1200,650 1160,900 1140,1050 1135,1150 1150,1350 1200,1470 1330,1568" c="#000" w={11} o={1} />
      <Line s="1040,60 1090,250 1140,480 1195,690" c="#000" w={11} o={1} />
      <Labels list={trLabels} />
      <Labels list={[[622, 1400, 85, "MOULTON PKWY"]]} {...HUGE} />
      <Labels list={[[1440, 372, 0, "Mission"], [1440, 422, 0, "Viejo"]]} size={48} fill="#111" o={1} weight={700} sx={0.86} />
      <path d="M975 0 H1078 Q1082 40 1072 52 Q1035 55 1025 72 Q1015 55 980 52 Q970 40 975 0 Z" fill="#111" stroke="#fff" strokeWidth="2" vectorEffect="non-scaling-stroke" />
      <text x="1025" y="48" textAnchor="middle" fontSize="48" fontWeight="700" fill="#fff" style={{ fontFamily: "Roboto, sans-serif" }}>73</text>
      <path d="M1092 1052 L1115 1056 L1138 1042 L1162 1056 L1186 1048 V1110 Q1180 1135 1139 1152 Q1098 1135 1090 1110 Z" fill="#fff" stroke="#111" strokeWidth="2" vectorEffect="non-scaling-stroke" />
      <path d="M1092 1052 L1115 1056 L1138 1042 L1162 1056 L1186 1048 V1082 H1091 Z" fill="#111" />
      <text x="1139" y="1132" textAnchor="middle" fontSize="56" fontWeight="700" fill="#111" style={{ fontFamily: "Roboto, sans-serif" }}>5</text>
    </g>
    <g transform="translate(316 533) scale(.34)">
      {z8Streets.map((s, i) => <Line key={i} s={s} />)}
      <Line s="980,0 900,100 840,130 700,270 560,430 480,570 460,650 470,800 455,1100 420,1300 405,1568" c="#5e5a4c" w={6.5} o={1} />
      <Line s="585,-170 590,-80 580,50 590,160 620,240 640,265" c="#6d736e" w={6.5} o={1} />
      <polygon fill="#6d736e" points="600,270 655,225 670,295" />
      <rect x="472" y="218" width="90" height="48" fill="#fff" stroke="#b04a4a" />
      <rect x="538" y="345" width="106" height="34" fill="#fff" stroke="#b04a4a" />
      <rect x="472" y="195" width="15" height="15" fill="#fff" stroke="#a33" strokeWidth="3" />
      <rect x="630" y="322" width="15" height="15" fill="#fff" stroke="#a33" strokeWidth="3" />
      <rect x="632" y="298" width="13" height="13" fill="#6b6358" />
      <rect x="872" y="772" width="15" height="15" fill="#6b6358" />
      <rect x="508" y="1400" width="15" height="15" fill="#6b6358" />
      <Labels list={z8Labels} />
      <Labels list={[[530, 210, 0, "Fire Dept"], [578, 335, 0, "Police Dept"]]} size={19} fill="#a33" o={1} weight={700} />
      <Labels list={[[590, 310, 0, "City Hall"]]} size={18} fill="#4a443a" o={1} />
      <Labels list={[[517, 234, 0, "STATION 5"], [517, 246, 0, "23600 PACIFIC"], [517, 259, 0, "ISLAND DR"]]} size={11} fill="#a33" o={1} />
      <Labels list={[[590, 360, 0, "30111 CROWN"], [590, 373, 0, "VALLEY PARKWAY"]]} size={11} fill="#a33" o={1} />
      <Labels list={[[790, 265, -48, "CROWN VALLEY PKWY"], [435, 850, -85, "CROWN VALLEY PKWY"], [370, 305, -62, "PACIFIC ISLAND DR"], [625, 80, -78, "ALICIA PKWY"]]} {...HUGE} />
    </g>
    <g transform="translate(0 533) scale(.34)">
      {blStreets.map((s, i) => <Line key={i} s={s} />)}
      {blWhite.map((s, i) => <Line key={i} s={s} c="#555" o={0.6} />)}
      <Line s="390,0 440,130 450,230 460,500" c="#999" o={0.7} dash="2 3" />
      <Line s="125,1215 180,1130 215,1085 250,1110 270,1180 200,1280 180,1360" c="#999" o={0.7} dash="2 3" />
      <Line s="920,240 940,300 930,420 930,560 950,740" c="#6a6258" o={0.6} dash="2 3" />
      <Line s="1430,155 1370,170 1320,220 1290,310 1240,390 1130,470 1080,590 1000,680 970,790 920,880 850,940 840,1050 870,1150 850,1280 825,1400 870,1510 925,1568" c="#5e5a4c" w={6.5} o={1} />
      <polygon fill="#5e5a4c" points="1435,125 1495,155 1435,185" />
      <Line s="0,1385 60,1470 130,1568" c="#000" w={13} o={1} />
      <Labels list={blLabels} />
      <Labels list={[[890, 1510, 50, "PACIFIC"]]} {...HUGE} />
    </g>
    <g transform="translate(837 533) scale(.34)">
      {brStreets.map((s, i) => <Line key={i} s={s} />)}
      {brWhite.map((s, i) => <Line key={i} s={s} c="#555" o={0.55} />)}
      <Line s="1000,0 985,110 1040,170 1110,280 1130,480 1075,530 1110,760" c="#999" o={0.7} dash="2 3" />
      <Line s="1130,820 1200,860 1300,1030 1280,1060" c="#999" o={0.7} dash="2 3" />
      <Line s="975,920 1060,930 1160,1030" c="#999" o={0.7} dash="2 3" />
      <Line s="1270,560 1330,650 1240,780 1250,860 1310,910" c="#999" o={0.7} />
      <Line s="1310,910 1340,1050 1355,1280 1440,1440 1510,1568" c="#b5c4c8" w={3} o={1} />
      <Line s="640,0 625,200" c="#9a7a62" w={6} o={1} />
      <Line s="625,200 605,350 625,470 690,570 780,680 825,800 825,950 800,1060 700,1230 620,1310 540,1370" c="#9a8560" w={6} o={1} />
      <Line s="540,1370 440,1430 350,1470 285,1568" c="#6b706a" w={6} o={1} />
      <Line s="1300,-15 1440,110 1530,260 1568,370" c="#000" w={11} o={1} />
      <Labels list={brLabels} />
      <Labels list={[[770, 825, 72, "ST OF THE GOLDEN LANTERN"]]} size={34} fill="#5f5a4a" o={1} />
      <rect x="467" y="1295" width="95" height="52" fill="#fff" stroke="#b04a4a" />
      <rect x="468" y="1275" width="15" height="15" fill="#fff" stroke="#a33" strokeWidth="3" />
      <Labels list={[[525, 1290, 0, "Fire Dept"]]} size={19} fill="#a33" o={1} weight={700} />
      <Labels list={[[512, 1312, 0, "STATION 49"], [512, 1325, 0, "31461 GOLDEN"], [512, 1338, 0, "LANTERN"]]} size={11} fill="#a33" o={1} />
      <Labels list={[[1250, 115, 0, "San"], [1250, 163, 0, "Clemente"], [1100, 760, 0, "San Juan"], [1100, 805, 0, "Capistrano"]]} size={50} fill="#111" o={1} weight={700} sx={0.86} />
      <path d="M1300 78 L1322 92 L1330 84 L1346 112 L1314 108 L1320 100 L1298 86 Z" fill="#111" />
    </g>
    <Circle x={626} y={78} c="#50665c" t="LGN01" />
    <Circle x={1130} y={131} c="#4b3524" t="LGN03" />
    <Circle x={891} y={480} c="#c0723a" t="LGN04" />
    <Circle x={479} y={521} c="#d99a42" t="LGN09" />
    <Circle x={951} y={760} c="#d39a42" t="LGN05" />
    <Circle x={599} y={746} c="#4e3050" t="LGN07" />
    <Circle x={391} y={864} c="#4b3421" t="LGN08" />
  </svg>
);

const Seal = () => (
  <svg viewBox="0 0 111 108" className="ml-[25px] h-[108px] w-[111px] shrink-0">
    <defs>
      <path id="sealTop" d="M10 64 A46 46 0 0 1 100 46" />
      <path id="sealBottom" d="M20 76 Q55 100 90 76" />
      <clipPath id="sealClip"><ellipse cx="55" cy="52" rx="38" ry="37" /></clipPath>
    </defs>
    <ellipse cx="55.5" cy="54" rx="54" ry="53" fill="#223b86" stroke="#8f7a3c" strokeWidth="2.5" strokeDasharray="2 1" />
    <ellipse cx="55" cy="52" rx="39" ry="38" fill="#e5c55c" />
    <g clipPath="url(#sealClip)">
      <rect x="15" y="13" width="80" height="42" fill="#76abd9" />
      <rect x="15" y="50" width="80" height="12" fill="#2a68b0" />
      <path d="M15 56 L40 58 L60 75 L95 64 V95 H15 Z" fill="#c08f50" />
      <path d="M50 48 q-2 -8 5 -9 q0 -8 8 -6 q8 -4 10 4 q5 1 3 11 z" fill="#fff" />
      <path d="M62 12 l30 6 v32 l-14 -6 l-4 -14 l-10 -4 z" fill="#2f7a3a" />
      <rect x="66" y="58" width="22" height="14" fill="#e9dca8" />
      <path d="M63 58 l13 -6 l13 6 z" fill="#7a4a2a" />
      <rect x="69" y="62" width="9" height="4" fill="#444" />
      <path d="M42 68 q8 -10 16 -2 q6 6 -2 10 h-12 z" fill="#3f8a3a" />
      <circle cx="47" cy="32" r="5.5" fill="#ef9f35" />
      <rect x="29" y="46" width="7" height="12" fill="#5a3020" />
      <circle cx="32" cy="42" r="3.5" fill="#5a3020" />
      <rect x="29" y="58" width="7" height="8" fill="#ddd" />
      <rect x="29" y="66" width="2.5" height="9" fill="#5a3020" /><rect x="33.5" y="66" width="2.5" height="9" fill="#5a3020" />
      <rect x="15" y="78" width="80" height="20" fill="#1e3a86" />
    </g>
    <text fontSize="10.6" fill="#d9c277" style={{ fontFamily: "Liberation Serif, serif" }}>
      <textPath href="#sealTop">CITY of LAGUNA NIGUEL</textPath>
    </text>
    <text fontSize="5" fill="#d9c277" style={{ fontFamily: "Liberation Serif, serif" }}>
      <textPath href="#sealBottom" startOffset="50%" textAnchor="middle">SEA COUNTRY</textPath>
    </text>
    <text x="55" y="102" textAnchor="middle" fontSize="10" fill="#e3d08c" style={{ fontFamily: "Liberation Serif, serif" }}>1989</text>
  </svg>
);

const Step = ({ title, tight }: { title: string; tight?: boolean }) => (
  <div className="flex items-center">
    <div className="flex h-[99px] w-[99px] shrink-0 items-center justify-center rounded-full bg-[#14149c] pr-[2px] text-[44px] font-bold text-white">1</div>
    <h2 className={`ml-[38px] text-[60px] leading-[70px] font-bold text-black [font-family:'DejaVu_Serif_Condensed','DejaVu_Serif',serif] ${tight ? "tracking-[-0.55px]" : ""}`}>{title}</h2>
  </div>
);

const ShowMore = () => (
  <div className="flex justify-end pr-[38px] text-[36px] leading-[46px] font-semibold text-[#14149c]">SHOW MORE</div>
);

const Check = ({ on, bold, children, x }: { on?: boolean; bold: boolean; children: string; x: number }) => (
  <div className={`flex h-[66px] items-center ${x ? "pl-[52px]" : "pl-[49px]"}`}>
    {on ? (
      <div className="flex h-[66px] w-[66px] items-center justify-center rounded-full bg-black">
        <svg viewBox="0 0 66 66" className="h-[66px] w-[66px]"><path d="M20 35 L29 46 L45 21" fill="none" stroke="#fff" strokeWidth="6" strokeLinecap="round" strokeLinejoin="round" /></svg>
      </div>
    ) : (
      <div className="h-[66px] w-[66px] rounded-full border-[6px] border-black" />
    )}
    <span className={`ml-[39px] text-[42px] text-black ${bold ? "font-semibold" : ""}`}>{children}</span>
  </div>
);

export default function App() {
  return (
    <div className="flex h-[3582px] w-[3588px] overflow-hidden bg-white text-black [font-family:Lato,sans-serif]">
      <main className="w-[2484px] shrink-0">
        <header className="flex items-center pt-[40px] pr-[24px] pl-[53px]">
          <div className="flex flex-col gap-[23px]">
            <span className="block h-[10px] w-[87px] rounded-full bg-black" />
            <span className="block h-[10px] w-[87px] rounded-full bg-black" />
            <span className="block h-[10px] w-[87px] rounded-full bg-black" />
          </div>
          <Seal />
          <div className="mt-[1px] ml-auto flex h-[102px] w-[639px] items-center self-start rounded-full bg-[#e6e6e6] pl-[40px]">
            <svg viewBox="0 0 37 38" className="h-[38px] w-[37px]"><circle cx="17.5" cy="17" r="15" fill="none" stroke="#000" strokeWidth="3.5" /><path d="M27 28 L34 37" stroke="#000" strokeWidth="3.5" strokeLinecap="round" /></svg>
            <span className="mt-[4px] ml-[23px] text-[42px]">How can we help...</span>
          </div>
        </header>

        <div className="mt-[99px] pl-[141px]">
          <div className="flex items-center text-[36px] leading-[44px] font-bold text-[#14149c]">
            PUBLIC SAFETY
            <svg viewBox="0 0 18 30" className="ml-[14px] h-[30px] w-[18px]"><path d="M3 3 L15 15 L3 27" fill="none" stroke="#14149c" strokeWidth="5.5" strokeLinecap="round" strokeLinejoin="round" /></svg>
          </div>
        </div>
        <h1 className="mt-[21px] pl-[138px] text-[60px] leading-[76px] font-bold [font-family:'DejaVu_Serif_Condensed','DejaVu_Serif',serif]">Evacuation Zones</h1>
        <p className="mt-[30px] pl-[138px] text-[42px] leading-[50px]">
          In the event of an emergency, knowing your Evacuation Zone is critical. To be prepared for a possible evacuation, follow<br />these 4 steps.
        </p>

        <div className="mt-[103px] ml-[126px] w-[2250px]">
          <div className="h-[3px] bg-[#e6e6e6]" />
          <div className="mt-[54px]"><Step title="Know Your Evacuation Zone" /></div>
          <p className="mt-[53px] pl-[15px] text-[42px] leading-[60px]">
            In the event of a wildfire or other emergency situation, law enforcement and fire agencies issue evacuation warnings or<br />evacuation orders for impacted areas. These notices may be issued in conjunction with a particular Zone.
          </p>
          <div className="mt-[54px]"><ShowMore /></div>
          <div className="relative mt-[69px] ml-[508px] h-[1066px] w-[1370px]">
            <MapArt />
            <div className="absolute top-[24px] left-[25px] flex h-[102px] w-[431px] items-center rounded-full bg-white/50 pl-[35px]">
              <svg viewBox="0 0 50 50" className="h-[50px] w-[50px]" fill="none" stroke="#000" strokeWidth="5.5" strokeLinecap="round" strokeLinejoin="round">
                <path d="M3 14 V6 Q3 3 6 3 H14 M36 3 H44 Q47 3 47 6 V14 M47 36 V44 Q47 47 44 47 H36 M14 47 H6 Q3 47 3 44 V36" />
                <path d="M28 22 L38 12 M30 11 H39 V20 M22 28 L12 38 M11 30 V39 H20" />
              </svg>
              <span className="ml-[16px] text-[42px] font-semibold">Pinch To Zoom</span>
            </div>
          </div>
          <div className="mt-[100px] pl-[27px] text-[42px] leading-[50px] font-semibold">Type your street address to find your Evacuation Zone</div>
          <div className="mt-[35px] flex items-start pl-[28px]">
            <div className="mt-[4px] flex h-[102px] w-[638px] items-center rounded-full bg-[#e6e6e6] pl-[36px]">
              <svg viewBox="0 0 44 50" className="h-[50px] w-[44px]" fill="none" stroke="#000" strokeWidth="3" strokeLinejoin="round">
                <path d="M22 2 L42 22 V44 Q42 48 38 48 H6 Q2 48 2 44 V22 Z" /><path d="M14 48 V26 H30 V48" />
              </svg>
              <span className="ml-[18px] text-[42px]">123 My Home St.</span>
            </div>
            <span className="mt-[25px] ml-[33px] text-[42px] leading-[52px]">is in</span>
            <div className="ml-[38px] flex h-[102px] w-[381px] items-center rounded-full bg-[#c27642] pl-[37px] text-white">
              <svg viewBox="0 0 40 48" className="h-[48px] w-[40px]" fill="none" stroke="#fff" strokeWidth="3" strokeLinejoin="round">
                <path d="M20 46 C10 34 4 26 4 18 A16 16 0 0 1 36 18 C36 26 30 34 20 46 Z" /><circle cx="20" cy="18" r="5.5" />
              </svg>
              <span className="ml-[16px] text-[42px] font-semibold">Zone LGN04</span>
            </div>
          </div>
          <div className="mt-[72px] h-[3px] bg-[#e6e6e6]" />
          <div className="mt-[54px]"><Step title="Gather Your Display Supply Kit" tight /></div>
          <p className="mt-[53px] pl-[15px] text-[42px] leading-[60px]">You should collect the following items and keep them in an area that is accessible in the event of an emergency.</p>
          <div className="mt-[46px]"><ShowMore /></div>
        </div>

        <section className="mt-[96px] ml-[641px] h-[600px] w-[1380px] bg-[#e6e6e6]">
          <div className="pt-[31px] pl-[32px] text-[42px] leading-[52px]"><span className="font-semibold">Disaster Supply Kit Checklist</span>&nbsp;&nbsp;(1/24 items checked)</div>
          <div className="mt-[49px] flex flex-col gap-[45px]">
            <Check bold x={0}>This is an item</Check>
            <Check bold x={0}>This is also an item</Check>
            <Check on bold={false} x={1}>This too is an item</Check>
            <Check bold x={1}>Cool, one more item!</Check>
          </div>
        </section>
      </main>

      <aside className="w-[1104px] shrink-0 bg-[#555555] pt-[43px] pl-[51px] text-[48px] leading-[57px] font-semibold text-white">
        <div className="text-[49px] font-light">Annotations</div>
        <p className="mt-[56px]">
          <span className="font-light">1.</span>For menu bar, after reaching a certain<br />width, use media queries in CSS to make<br />visible a minimal menu bar, this one having a<br />hamburger menu with the other menu<br />items, the menu should use flexbox to take<br />the full width of the horizontal area
        </p>
        <p className="mt-[118px]">
          2. For the row elements in “Know Your<br />Evacuation Zone”, “Gather Your Disaster<br />Supply Kit,” and the three-panel rows in<br />“Know the Evacuation Terminlogy” and<br />“Subscribe to Emergency Notifications”, at a<br />certain widthuse CSS media queries to<br />convert flexbox row property to a column (i.e.<br />flex-direction: column)
        </p>
        <p className="mt-[108px]">
          3. After a certain width, use CSS media<br />queries to convert the font size of the header<br />from 24px to 20px
        </p>
        <p className="mt-[108px]">
          4. After a certain width, set a maximum line-<br />height on body paragraphs, and use a SHOW<br />MORE button to enlarge paragraphs rather<br />than showing all text
        </p>
      </aside>
    </div>
  );
}
